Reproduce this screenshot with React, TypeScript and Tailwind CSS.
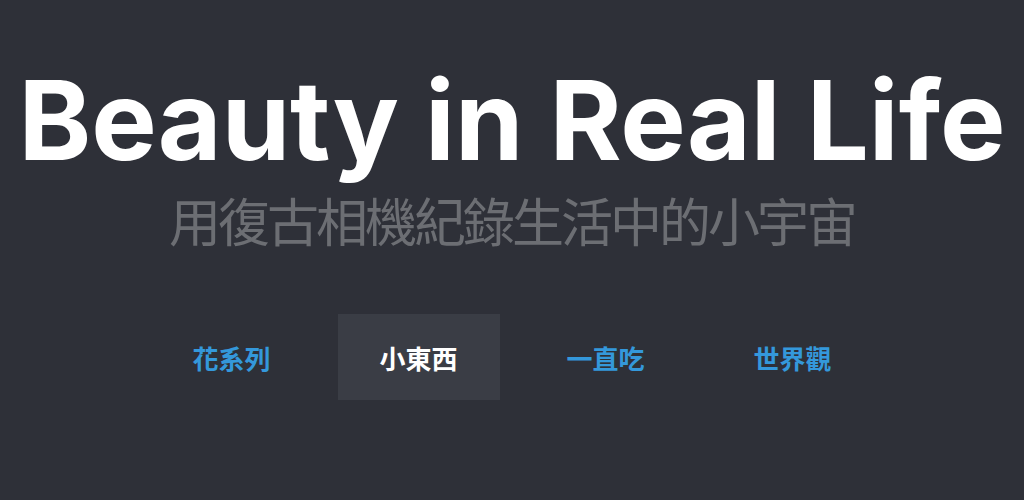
import React from 'react';

const tabs = ['花系列', '小東西', '一直吃', '世界觀'];

export default function App() {
  const active = '小東西';
  return (
    <div className="flex h-[500px] w-full flex-col items-center bg-[#2e3038] font-['Inter','Noto_Sans_CJK_TC',sans-serif]">
      <h1 className="mt-[60px] whitespace-nowrap text-[110px] font-bold leading-[120px] tracking-[0px] text-white">
        Beauty in Real Life
      </h1>
      <p className="mt-[10px] text-[52px] leading-[60px] tracking-[-3px] text-[#6c6e73] font-['Noto_Sans_CJK_TC',sans-serif]">
        用復古相機紀錄生活中的小宇宙
      </p>
      <nav className="mt-[64px] flex gap-[25px]">
        {tabs.map((t) => (
          <a
            key={t}
            href="#"
            className={
              t === active
                ? "flex h-[86px] w-[162px] items-center justify-center bg-[#3a3d45] text-[26px] font-bold text-white font-['Noto_Sans_CJK_TC',sans-serif]"
                : "flex h-[86px] w-[162px] items-center justify-center text-[26px] font-bold text-[#3498db] font-['Noto_Sans_CJK_TC',sans-serif]"
            }
          >
            {t}
          </a>
        ))}
      </nav>
    </div>
  );
}
